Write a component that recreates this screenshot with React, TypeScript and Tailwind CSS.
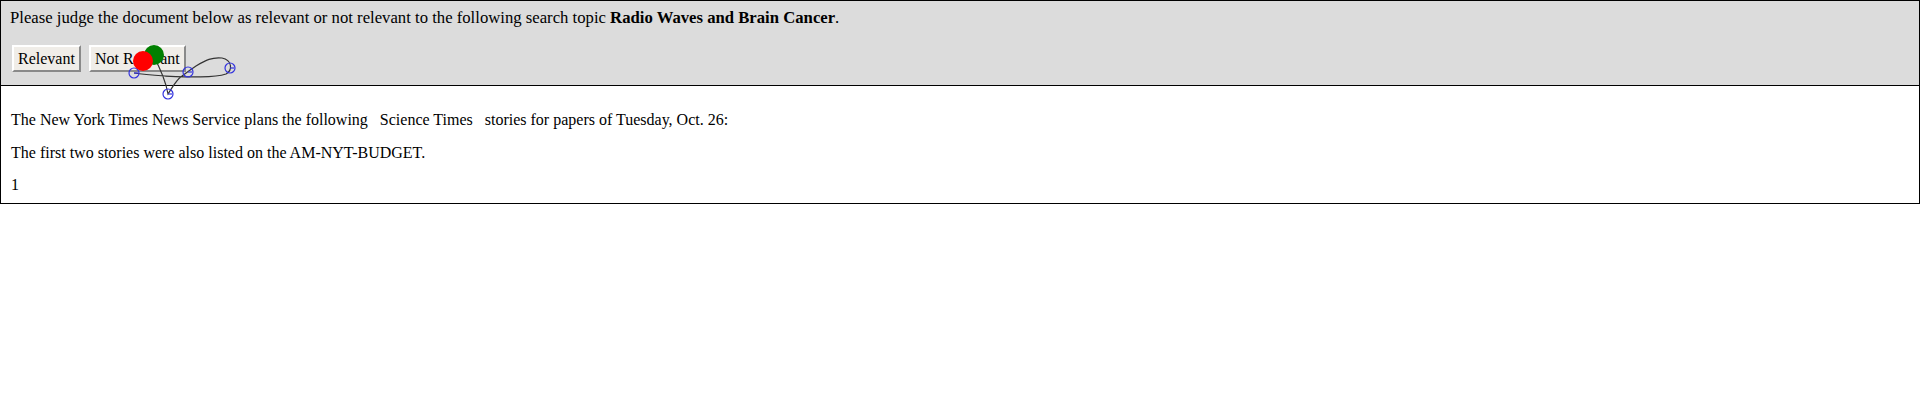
const Trace = () => (
  <svg
    className="absolute left-0 top-0 pointer-events-none"
    width="260"
    height="110"
    viewBox="0 0 260 110"
  >
    <path
      d="M153,55 C160,68 166,82 168,94 C172,88 176,80 182,76 C186,73 190,70 196,66 C206,60 212,57 222,58 C232,60 233,70 226,74 C214,78 190,77 165,76 C150,75 140,74 134,73"
      fill="none"
      stroke="#333"
      strokeWidth="1.2"
    />
    {[
      [134, 73],
      [188, 72],
      [230, 68],
      [168, 94],
    ].map(([cx, cy], i) => (
      <g key={i}>
        <circle cx={cx} cy={cy} r="5" fill="none" stroke="#3333dd" strokeWidth="1.2" />
        <line x1={cx} y1={cy} x2={cx + 4} y2={cy} stroke="#3333dd" strokeWidth="1.2" />
      </g>
    ))}
    <circle cx="154" cy="55" r="10" fill="#008000" />
    <circle cx="143" cy="61" r="10" fill="#ff0000" />
  </svg>
);

export default function App() {
  const btn =
    "h-[27px] px-[4px] bg-[#f0ede8] text-black text-[16px] leading-none border-2 border-t-[#ffffff] border-l-[#ffffff] border-b-[#8a8a8a] border-r-[#8a8a8a]";

  return (
    <div className="relative w-full font-['Liberation_Serif','Times_New_Roman',serif] text-[16px] text-black">
      <div className="border border-black">
        {/* Header */}
        <div className="bg-[#dcdcdc] border-b border-black px-[9px] pt-[7px] pb-[13px]">
          <p className="leading-[19px] text-[16.7px]">
            Please judge the document below as relevant or not relevant to the following search topic{" "}
            <b>Radio Waves and Brain Cancer</b>.
          </p>
          <div className="flex gap-[8px] mt-[18px] ml-[2px]">
            <button className={btn}>Relevant</button>
            <button className={btn}>Not Relevant</button>
          </div>
        </div>

        {/* Document */}
        <div className="px-[10px] pt-[25px] pb-[9px] flex flex-col gap-[14.5px] leading-[18px]">
          <p className="whitespace-pre">
            The New York Times News Service plans the following   Science Times   stories for papers of Tuesday, Oct. 26:
          </p>
          <p>The first two stories were also listed on the AM-NYT-BUDGET.</p>
          <p>1</p>
        </div>
      </div>
      <Trace />
    </div>
  );
}
